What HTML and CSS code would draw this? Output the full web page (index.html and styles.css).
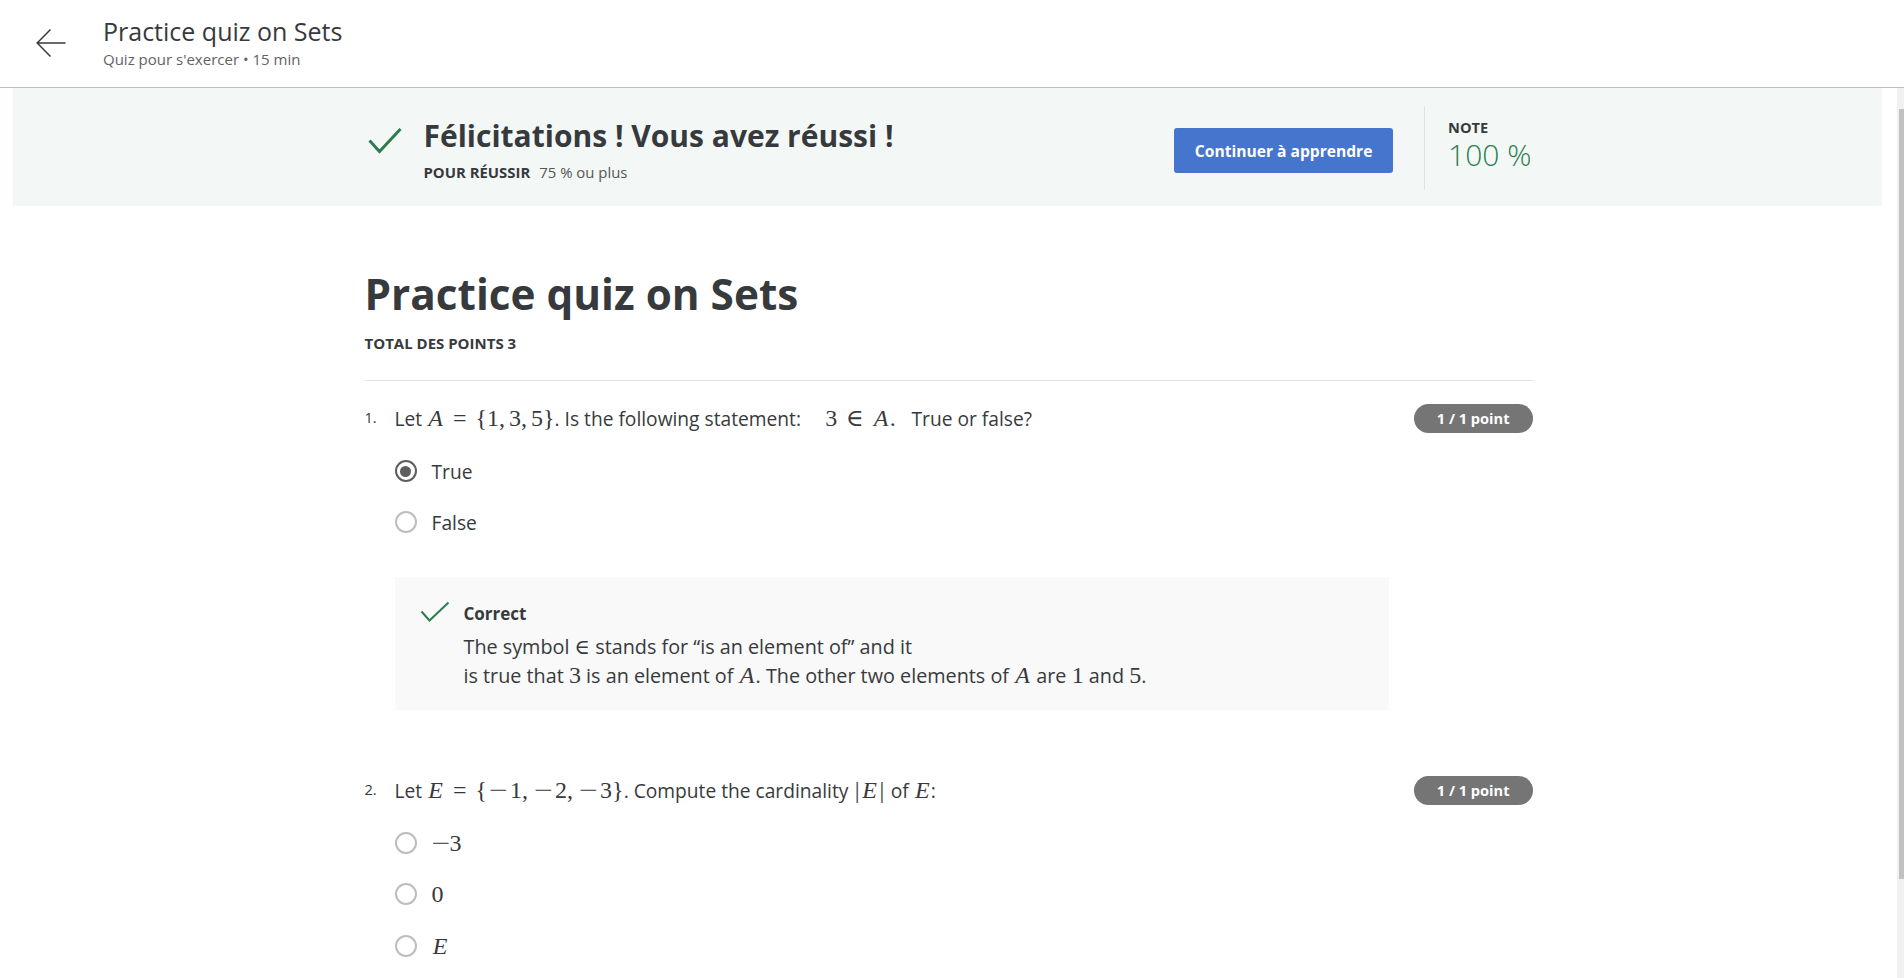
FILE: index.html
```html
<!DOCTYPE html>
<html lang="fr">
<head>
<meta charset="utf-8">
<title>Practice quiz on Sets</title>
<link rel="stylesheet" href="styles.css">
</head>
<body>
<header class="topbar">
  <svg class="back" viewBox="0 0 30 30" width="30" height="30" aria-hidden="true">
    <path d="M29.5 15H1.2M14.5 1.5L1.2 15L14.5 28.5" fill="none" stroke="#3a3a3a" stroke-width="1.5" stroke-linejoin="miter"/>
  </svg>
  <div class="top-text">
    <div class="top-title">Practice quiz on Sets</div>
    <div class="top-sub">Quiz pour s'exercer • 15 min</div>
  </div>
</header>
<div class="viewport">
  <main class="page">
    <section class="banner">
      <div class="banner-inner">
        <div class="pass">
          <svg class="pass-check" viewBox="0 0 34 28" width="34" height="28" aria-hidden="true">
            <path d="M1.5 13.5L11.5 24.5L32.5 2" fill="none" stroke="#2e7d50" stroke-width="3"/>
          </svg>
          <div class="pass-text">
            <h2 class="pass-title">Félicitations ! Vous avez réussi !</h2>
            <div class="pass-req"><b>POUR RÉUSSIR</b><span class="req-val">75 % ou plus</span></div>
          </div>
        </div>
        <button class="cta">Continuer à apprendre</button>
        <div class="grade">
          <div class="grade-label">NOTE</div>
          <div class="grade-value">100 %</div>
        </div>
      </div>
    </section>

    <div class="content">
      <h1 class="quiz-title">Practice quiz on Sets</h1>
      <div class="total">TOTAL DES POINTS 3</div>
      <hr class="rule">

      <div class="question">
        <div class="qnum">1.</div>
        <div class="qbody">
          <div class="qtext">Let <span class="m"><i>A</i><span class="rel">=</span>{1,<span class="cs"></span>3,<span class="cs"></span>5}</span>. Is the following statement: <span class="m gap"><span>3</span><span class="rel">∈</span><i>A</i>.</span> True or false?</div>
          <div class="options">
            <div class="option"><span class="radio on"></span><span>True</span></div>
            <div class="option"><span class="radio"></span><span>False</span></div>
          </div>
          <div class="feedback">
            <svg class="fb-check" viewBox="0 0 30 22" width="30" height="22" aria-hidden="true">
              <path d="M1.5 10.5L9.5 19.5L28.5 1.5" fill="none" stroke="#2e7d50" stroke-width="2"/>
            </svg>
            <div class="fb-body">
              <div class="fb-title">Correct</div>
              <div class="fb-text">The symbol <span class="m sm">∈</span> stands for “is an element of” and it<br>is true that <span class="m">3</span> is an element of <span class="m"><i>A</i></span>. The other two elements of <span class="m"><i>A</i></span> are <span class="m">1</span> and <span class="m">5</span>.</div>
            </div>
          </div>
        </div>
        <div class="badge">1 / 1 point</div>
      </div>

      <div class="question q2">
        <div class="qnum">2.</div>
        <div class="qbody">
          <div class="qtext">Let <span class="m"><i>E</i><span class="rel">=</span>{<span class="mi">−</span>1,<span class="cs"></span><span class="mi">−</span>2,<span class="cs"></span><span class="mi">−</span>3}</span>. Compute the cardinality <span class="m"><span class="bar">|</span><i>E</i><span class="bar">|</span></span> of <span class="m"><i>E</i></span>:</div>
          <div class="options">
            <div class="option"><span class="radio"></span><span class="m"><span class="mi un">−</span>3</span></div>
            <div class="option"><span class="radio"></span><span class="m">0</span></div>
            <div class="option"><span class="radio"></span><span class="m"><i>E</i></span></div>
          </div>
        </div>
        <div class="badge">1 / 1 point</div>
      </div>
    </div>
  </main>
  <div class="scrollbar"><div class="thumb"></div></div>
</div>
</body>
</html>
```

FILE: styles.css
```css
html, body {
  margin: 0;
  padding: 0;
}
body {
  width: 1904px;
  height: 978px;
  overflow: hidden;
  display: flex;
  flex-direction: column;
  font-family: "Open Sans", "Noto Sans", sans-serif;
  color: #373a3c;
  background: #fff;
}

/* top bar */
.topbar {
  height: 87px;
  flex: 0 0 87px;
  border-bottom: 1px solid #bdbdbd;
  display: flex;
  align-items: flex-start;
  padding-left: 36px;
}
.back {
  margin-top: 28px;
  flex: 0 0 30px;
}
.top-text {
  margin-left: 37px;
  padding-top: 16px;
}
.top-title {
  font-size: 25px;
  line-height: 30px;
  color: #373a3c;
}
.top-sub {
  margin-top: 2.5px;
  font-size: 15px;
  line-height: 20px;
  color: #636363;
}

/* scrolling area */
.viewport {
  flex: 1;
  display: flex;
  min-height: 0;
}
.page {
  flex: 1;
  min-width: 0;
}
.scrollbar {
  width: 7px;
  flex: 0 0 7px;
  background: #f1f1f1;
}
.thumb {
  margin: 21px 0 0 2px;
  height: 770px;
  background: #c1c1c1;
}

/* success banner */
.banner {
  margin: 0 15px 0 13px;
  background: #f3f8f6;
  padding: 18px 0 16px;
}
.banner-inner {
  width: 1168px;
  margin: 0 auto;
  height: 84px;
  display: flex;
}
.pass {
  flex: 1;
  display: flex;
  align-items: flex-start;
  padding-top: 11.5px;
}
.pass-check {
  margin: 9px 0 0 4px;
  flex: 0 0 34px;
}
.pass-text {
  margin-left: 22px;
}
.pass-title {
  margin: 0;
  font-size: 30px;
  line-height: 36px;
  font-weight: 700;
  color: #373a3c;
}
.pass-req {
  margin-top: 8.8px;
  font-size: 14.9px;
  line-height: 20px;
}
.pass-req b {
  font-weight: 700;
}
.req-val {
  margin-left: 9px;
  color: #555;
}
.cta {
  align-self: flex-start;
  margin-top: 22px;
  margin-right: 31px;
  width: 219px;
  height: 45px;
  padding: 0;
  border: 0;
  border-radius: 3px;
  background: #4575cc;
  color: #fff;
  font-family: "Open Sans", sans-serif;
  font-size: 15.6px;
  font-weight: 700;
}
.grade {
  border-left: 1px solid #e1e1e1;
  padding-left: 23px;
  padding-top: 10.6px;
}
.grade-label {
  font-size: 14.6px;
  line-height: 20px;
  font-weight: 700;
}
.grade-value {
  margin-top: 2px;
  font-size: 30px;
  line-height: 32px;
  font-weight: 300;
  color: #2a7f4f;
}

/* quiz body */
.content {
  width: 1168px;
  margin: 0 auto;
  padding-top: 63px;
}
.quiz-title {
  margin: 0;
  font-size: 42.3px;
  line-height: 50px;
  font-weight: 700;
}
.total {
  margin-top: 13.5px;
  font-size: 15px;
  line-height: 20px;
  font-weight: 700;
}
.rule {
  margin: 27.5px 0 0;
  border: 0;
  border-top: 1px solid #e1e1e1;
  height: 0;
}
.question {
  margin-top: 23px;
  display: flex;
  align-items: flex-start;
}
.question.q2 {
  margin-top: 66px;
}
.qnum {
  width: 30px;
  flex: 0 0 30px;
  padding-top: 3.3px;
  font-size: 14.6px;
  line-height: 20px;
}
.qbody {
  flex: 1;
}
.qtext {
  font-size: 19.2px;
  line-height: 29.1px;
}
.badge {
  flex: 0 0 auto;
  height: 29px;
  padding: 0 23px;
  border-radius: 15px;
  background: #757575;
  color: #fff;
  font-size: 14.6px;
  line-height: 29px;
  font-weight: 700;
}
.options {
  margin-top: 23.4px;
  display: flex;
  flex-direction: column;
  gap: 22.2px;
}
.option {
  display: flex;
  align-items: center;
  height: 29.1px;
  font-size: 19.2px;
}
.radio {
  width: 22px;
  height: 22px;
  flex: 0 0 22px;
  box-sizing: border-box;
  border-radius: 50%;
  border: 2px solid #bdbdbd;
  margin-right: 15px;
  display: flex;
  align-items: center;
  justify-content: center;
}
.radio.on {
  border: 2.5px solid #5e5e5e;
}
.radio.on::after {
  content: "";
  width: 11px;
  height: 11px;
  border-radius: 50%;
  background: #5e5e5e;
}

/* feedback */
.feedback {
  margin-top: 40px;
  width: 994px;
  box-sizing: border-box;
  background: #f8f9f8;
  padding: 24px 26px 20px 25px;
  display: flex;
  align-items: flex-start;
}
.fb-check {
  flex: 0 0 30px;
}
.fb-body {
  margin-left: 14px;
  padding-top: 1.4px;
}
.fb-title {
  font-size: 17px;
  line-height: 24px;
  font-weight: 700;
}
.fb-text {
  margin-top: 5.5px;
  font-size: 19.8px;
  line-height: 29.1px;
}

/* math */
.m {
  font-family: "Liberation Serif", "DejaVu Serif", serif;
  font-size: 24px;
  line-height: 0;
}
.m.sm {
  font-size: 21px;
}
.m i {
  font-style: italic;
  padding: 0 0.05em;
}
.rel {
  margin: 0 0.37em;
}
.mi {
  display: inline-block;
  width: 0.96em;
  text-align: center;
  transform: scaleX(1.4);
}
.mi.un {
  width: 0.75em;
}
.bar {
  padding: 0 0.06em;
}
.cs {
  display: inline-block;
  width: 0.1667em;
}
.gap {
  margin: 0 0.45em 0 0.8em;
}
```
